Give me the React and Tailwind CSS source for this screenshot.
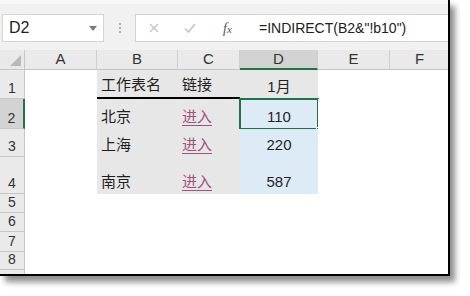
import React from 'react';

const font = { fontFamily: '"Liberation Sans", "Noto Sans CJK SC", sans-serif' };

const cols = ['A', 'B', 'C', 'D', 'E', 'F'];
const rowHeights = [29, 30, 28, 37, 19, 19, 20, 18, 10];

const data = {
    1: { B: '工作表名', C: '链接', D: '1月' },
    2: { B: '北京', C: '进入', D: '110' },
    3: { B: '上海', C: '进入', D: '220' },
    4: { B: '南京', C: '进入', D: '587' },
};

const cellBg = (r, c) => {
    if (r > 4) return 'bg-white';
    if (c === 'D' && r > 1) return 'bg-[#ddebf7]';
    if (c === 'B' || c === 'C' || c === 'D') return 'bg-[#e8e7e7]';
    return 'bg-white';
};

const Cell = ({ r, c }) => {
    const v = data[r] && data[r][c];
    const link = r > 1 && c === 'C';
    const align = c === 'D' ? 'justify-center' : 'justify-start pl-[4px]';
    const underline = r === 1 && (c === 'B' || c === 'C') ? 'border-b-2 border-black' : '';
    return (
        <div className={`relative flex items-end pb-[5px] text-[15px] leading-none ${align} ${cellBg(r, c)} ${underline}`}>
            {v && (
                <span className={link ? 'text-[#a0527b] underline decoration-1 underline-offset-[3px]' : 'text-[#1f1f1f]'}>
                    {v}
                </span>
            )}
            {r === 2 && c === 'D' && (
                <>
                    <div className="absolute -top-[1px] -left-[1px] -right-[1px] -bottom-[1px] border-2 border-[#217346]" />
                    <div className="absolute -right-[4px] -bottom-[4px] w-[6px] h-[6px] bg-[#217346] border border-white" />
                </>
            )}
        </div>
    );
};

const App = () => {
    return (
        <div className="w-[470px] h-[296px] bg-white" style={font}>
            <div className="w-[450px] h-[276px] flex flex-col bg-white border-r-2 border-b-2 border-black shadow-[5px_6px_6px_rgba(0,0,0,0.45)] overflow-hidden">
                {/* formula bar */}
                <div className="h-[50px] bg-[#f1f1f1] border-t-[4px] border-[#f8f8f8] flex items-start pt-[10px] shrink-0">
                    <div className="ml-[2px] w-[102px] h-[28px] bg-white border border-[#d4d4d4] flex items-center justify-between px-[6px]">
                        <span className="text-[16px] text-[#222]">D2</span>
                        <svg width="8" height="5" viewBox="0 0 8 5"><path d="M0 0h8L4 5z" fill="#7a7a7a" /></svg>
                    </div>
                    <div className="w-[31px] h-[28px] flex flex-col items-center justify-center gap-[2px]">
                        <div className="w-[2px] h-[2px] bg-[#b0b0b0]" />
                        <div className="w-[2px] h-[2px] bg-[#b0b0b0]" />
                        <div className="w-[2px] h-[2px] bg-[#b0b0b0]" />
                    </div>
                    <div className="flex-1 h-[28px] bg-white border border-[#d4d4d4] border-r-0 flex items-center">
                        <div className="w-[115px] flex items-center">
                            <svg className="ml-[13px]" width="10" height="10" viewBox="0 0 10 10">
                                <path d="M1 1l8 8M9 1l-8 8" stroke="#c4c4c4" strokeWidth="1.4" />
                            </svg>
                            <svg className="ml-[25px]" width="12" height="10" viewBox="0 0 12 10">
                                <path d="M1 5.5l3.5 3.5L11 1" stroke="#c4c4c4" strokeWidth="1.6" fill="none" />
                            </svg>
                            <span className="ml-[27px] text-[14px] italic text-[#555]" style={{ fontFamily: '"Liberation Serif", serif' }}>
                                f<span className="text-[11px]">x</span>
                            </span>
                        </div>
                        <span className="ml-[8px] text-[14px] text-[#222]">=INDIRECT(B2&amp;"!b10")</span>
                    </div>
                </div>
                {/* sheet */}
                <div
                    className="grid flex-1"
                    style={{
                        gridTemplateColumns: '25px 72px 81px 62px 78px 72px 60px',
                        gridTemplateRows: `20px ${rowHeights.map((h) => h + 'px').join(' ')}`,
                    }}
                >
                    <div className="bg-[#e9e9e9] border-r border-b border-[#c6c6c6] flex items-end justify-end p-[3px]">
                        <svg width="11" height="11" viewBox="0 0 11 11"><path d="M11 0v11H0z" fill="#b9b9b9" /></svg>
                    </div>
                    {cols.map((c) => (
                        <div
                            key={c}
                            className={`flex items-center justify-center text-[15px] text-[#333] border-r border-[#d0d0d0] ${
                                c === 'D' ? 'bg-[#d3d3d3] border-b-2 border-b-[#217346]' : 'bg-[#eaeaea] border-b border-b-[#c6c6c6]'
                            }`}
                        >
                            {c}
                        </div>
                    ))}
                    {rowHeights.map((h, i) => {
                        const r = i + 1;
                        return (
                            <React.Fragment key={r}>
                                <div
                                    className={`flex items-end justify-center pb-[3px] text-[14px] leading-none text-[#333] border-b border-[#c6c6c6] ${
                                        r === 2 ? 'bg-[#d3d3d3] border-r-2 border-r-[#217346]' : 'bg-[#eaeaea] border-r border-r-[#c6c6c6]'
                                    }`}
                                >
                                    {r < 9 ? r : ''}
                                </div>
                                {cols.map((c) => (
                                    <Cell key={c} r={r} c={c} />
                                ))}
                            </React.Fragment>
                        );
                    })}
                </div>
            </div>
        </div>
    );
};

export default App;
